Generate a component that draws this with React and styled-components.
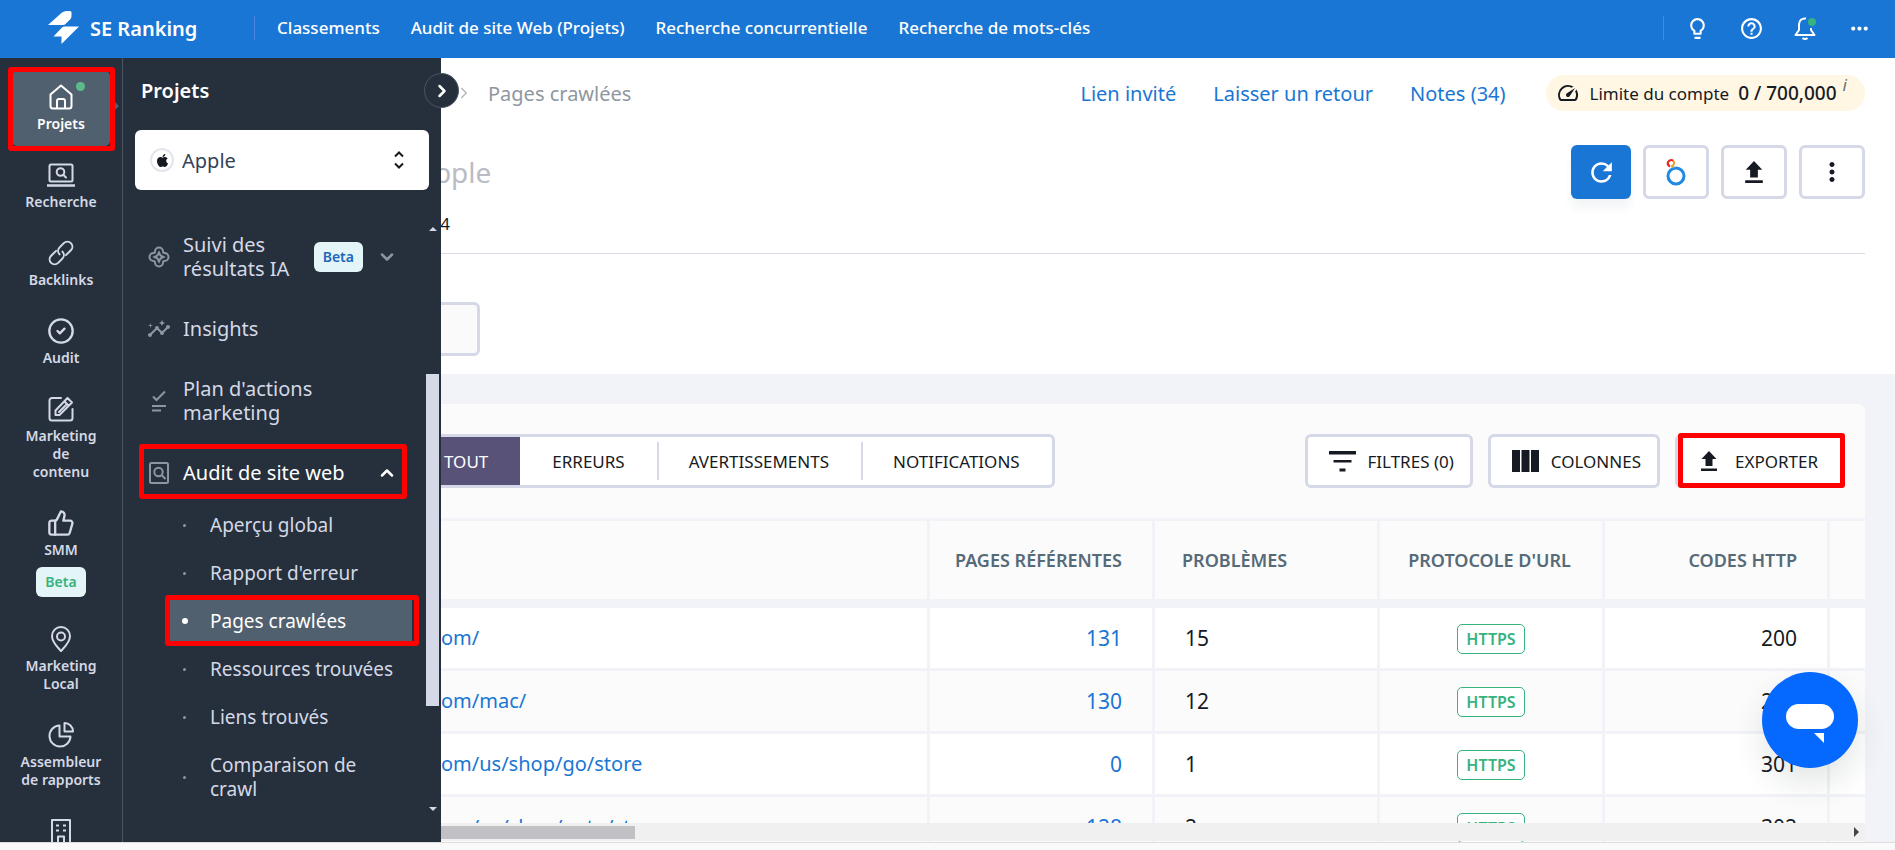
import React from "react";
import styled, { createGlobalStyle, css } from "styled-components";
import { FaApple } from "react-icons/fa";
import {
  MdHelpOutline,
  MdInsights,
  MdLightbulbOutline,
  MdMoreHoriz,
  MdMoreVert,
  MdOutlineSpeed,
  MdRefresh,
} from "react-icons/md";
import { ChevronDown, ChevronRight, ChevronUp, CircleCheck, ThumbsUp } from "lucide-react";

const topLinks = [
  "Classements",
  "Audit de site Web (Projets)",
  "Recherche concurrentielle",
  "Recherche de mots-clés",
];

const subPages = [
  { name: "Aperçu global" },
  { name: "Rapport d'erreur" },
  { name: "Pages crawlées", active: true },
  { name: "Ressources trouvées" },
  { name: "Liens trouvés" },
  { name: "Comparaison de crawl" },
];

const tabs = ["Tout", "Erreurs", "Avertissements", "Notifications"];

const pages = [
  { url: "om/", refs: 131, issues: 15, code: 200 },
  { url: "om/mac/", refs: 130, issues: 12, code: 200 },
  { url: "om/us/shop/go/store", refs: 0, issues: 1, code: 301 },
  { url: "om/us/shop/goto/st", refs: 128, issues: 2, code: 302 },
];

/* ---------- icons ---------- */

const LineIcon = ({ size = 28, children }) => (
  <svg width={size} height={size} viewBox="0 0 28 28" fill="none" stroke="currentColor" strokeWidth="2" strokeLinejoin="round" strokeLinecap="round" aria-hidden="true">
    {children}
  </svg>
);

const Logo = () => (
  <svg width="32" height="36" viewBox="0 0 32 36" fill="#fff" aria-hidden="true">
    <path d="M0 15 14 2.500Q16 1 18.500 1H22Q23.500 1 23.500 2.500V6Q23.500 8 22 9.500L17.500 14Q16.500 15 15 15Z" />
    <path d="M31 16.500 13.500 34V26.500H5.500L14 17.500Q15 16.500 16.500 16.500Z" />
  </svg>
);

const HomeIcon = () => (
  <LineIcon>
    <path d="M3.500 11.500 14 2.500l10.500 9V23a2.500 2.500 0 0 1-2.500 2.500H6A2.500 2.500 0 0 1 3.500 23Z" />
    <path d="M10 25v-7a2 2 0 0 1 2-2h4a2 2 0 0 1 2 2v7" />
  </LineIcon>
);

const SearchIcon = () => (
  <LineIcon>
    <rect x="2.500" y="3.500" width="23" height="17" rx="1.500" />
    <path d="M.5 24.500h27" strokeWidth="2.500" />
    <circle cx="13.500" cy="11" r="3.800" />
    <path d="m16.500 14 2.500 2.500" />
  </LineIcon>
);

const LinkIcon = () => (
  <LineIcon>
    <g transform="rotate(-45 14 14)">
      <path d="M12 9H5a5 5 0 0 0 0 10h6a5 5 0 0 0 5-5" />
      <path d="M16 19h7a5 5 0 0 0 0-10h-6a5 5 0 0 0-5 5" />
    </g>
  </LineIcon>
);

const EditIcon = () => (
  <LineIcon>
    <path d="M14 3H5a2.500 2.500 0 0 0-2.500 2.500V23A2.500 2.500 0 0 0 5 25.500h18a2.500 2.500 0 0 0 2.500-2.500v-9" />
    <path d="M8.500 19.500v-4L20.500 3 25 7.500 12.500 20H8.500ZM17.500 6.500l4 4M12 17l8-8" />
  </LineIcon>
);

const PinIcon = () => (
  <LineIcon>
    <path d="M14 26C11 22.500 5 17.500 5 11a9 9 0 0 1 18 0c0 6.500-6 11.500-9 15Z" />
    <circle cx="14" cy="11.500" r="4" />
  </LineIcon>
);

const PieIcon = () => (
  <LineIcon>
    <path d="M12.500 4.500a10.500 10.500 0 1 0 11 11h-11Z" />
    <path d="M17.500 2v8.500H26A8.500 8.500 0 0 0 17.500 2Z" />
  </LineIcon>
);

const BuildingIcon = () => (
  <LineIcon>
    <path d="M5 28V3h18v25M11 28v-8.500h6V28M9 8.500h3M9 13.500h3M16 8.500h3M16 13.500h3" strokeLinecap="butt" />
  </LineIcon>
);

const BellIcon = () => (
  <svg width="24" height="24" viewBox="0 0 24 24" fill="none" stroke="#fff" strokeWidth="2" strokeLinejoin="round" aria-hidden="true">
    <path d="M13 2.500c-4-.6-7 2-7 6V14l-3.500 5h19L18 14v-2M9.500 22c1.500 1.300 3.500 1.300 5 0" />
    <circle cx="19" cy="6" r="4" fill="#36b37e" stroke="none" />
  </svg>
);

const FlowerIcon = () => (
  <svg width="24" height="24" viewBox="0 0 24 24" fill="none" stroke="currentColor" strokeWidth="2" aria-hidden="true">
    <path d="M8 6.500a4 4 0 0 1 8 0c0 1 .5 1.500 1.500 1.500a4 4 0 0 1 0 8c-1 0-1.500.5-1.500 1.500a4 4 0 0 1-8 0c0-1-.5-1.500-1.500-1.500a4 4 0 0 1 0-8C7.500 8 8 7.500 8 6.500Z" />
    <path d="M12 7.500 13.500 10.500 16.500 12l-3 1.500L12 16.500l-1.500-3L7.500 12l3-1.500Z" />
  </svg>
);

const PlanIcon = () => (
  <svg width="24" height="24" viewBox="0 0 24 24" fill="none" stroke="currentColor" strokeWidth="2" aria-hidden="true">
    <path d="M6 7.500 9.500 11 18 2.500M5 17h14M5 21.500h9" />
  </svg>
);

const AuditIcon = () => (
  <svg width="24" height="24" viewBox="0 0 24 24" fill="none" stroke="currentColor" strokeWidth="2" aria-hidden="true">
    <rect x="3" y="2" width="18" height="20" rx="1.500" />
    <circle cx="11.500" cy="11" r="4.200" />
    <path d="m14.500 14 4 4" />
  </svg>
);

const ConsoleIcon = () => (
  <svg width="24" height="28" viewBox="0 0 24 28" fill="none" strokeWidth="3" aria-hidden="true">
    <circle cx="12" cy="18" r="8" stroke="#1e88e5" />
    <path d="M4 7a3.500 3.500 0 0 1 5.500-4" stroke="#e8271c" strokeWidth="2" />
    <path d="M9 2.500A3.500 3.500 0 0 1 7 8.500" stroke="#f29b1d" strokeWidth="2" />
    <path d="M4 5a3.500 3.500 0 0 0 2 3.500" stroke="#e8271c" strokeWidth="2" />
    <path d="M8.500 7.500 9.500 10" stroke="#d9a53a" strokeWidth="2" />
  </svg>
);

const UploadIcon = ({ size = 20 }) => (
  <svg width={size} height={size} viewBox="0 0 20 20" fill="currentColor" aria-hidden="true">
    <path d="M10 0 17.500 8H13.500V15H6.500V8H2.500ZM2 17.500h16V20H2Z" />
  </svg>
);

const FilterIcon = () => (
  <svg width="27" height="22" viewBox="0 0 27 22" fill="currentColor" aria-hidden="true">
    <path d="M0 1h27v3.500H0ZM4.500 10h18v2.500h-18ZM10.500 18.500h6v3h-6Z" />
  </svg>
);

const ColumnsIcon = () => (
  <svg width="27" height="22" viewBox="0 0 27 22" fill="currentColor" aria-hidden="true">
    <path d="M0 0h8v22H0ZM9.500 0h8v22h-8ZM19 0h8v22h-8Z" />
  </svg>
);

const ChatIcon = () => (
  <svg width="48" height="40" viewBox="0 0 48 40" fill="#fff" aria-hidden="true">
    <rect width="48" height="25" rx="12.500" />
    <path d="M28 29h10v10Z" />
  </svg>
);

const UpDownIcon = () => (
  <svg width="12" height="18" viewBox="0 0 12 18" fill="none" stroke="#161a22" strokeWidth="2" aria-hidden="true">
    <path d="M2 5.500 6 1.500l4 4M2 12.500l4 4 4-4" />
  </svg>
);

const railItems = [
  { label: "Projets", icon: <HomeIcon />, active: true },
  { label: "Recherche", icon: <SearchIcon /> },
  { label: "Backlinks", icon: <LinkIcon /> },
  { label: "Audit", icon: <CircleCheck size={28} strokeWidth={2} /> },
  { label: "Marketing\nde\ncontenu", icon: <EditIcon /> },
  { label: "SMM", icon: <ThumbsUp size={28} strokeWidth={2} />, beta: true },
  { label: "Marketing\nLocal", icon: <PinIcon /> },
  { label: "Assembleur\nde rapports", icon: <PieIcon /> },
];

/* ---------- page ---------- */

const App = () => {
  return (
    <Page>
      <GlobalStyle />
      <TopBar>
        <Brand href="#">
          <Logo />
          SE Ranking
        </Brand>
        <TopNav>
          {topLinks.map((link) => (
            <a href="#" key={link}>{link}</a>
          ))}
        </TopNav>
        <TopTools>
          <ToolButton aria-label="Idées"><MdLightbulbOutline size={25} /></ToolButton>
          <ToolButton aria-label="Aide"><MdHelpOutline size={25} /></ToolButton>
          <ToolButton aria-label="Alertes"><BellIcon /></ToolButton>
          <ToolButton aria-label="Plus"><MdMoreHoriz size={25} /></ToolButton>
        </TopTools>
      </TopBar>

      <Body>
        <Rail>
          {railItems.map((item) => (
            <RailItem href="#" key={item.label} $active={item.active}>
              <RailIcon>{item.icon}</RailIcon>
              <span>{item.label}</span>
              {item.beta && <Beta $green>Beta</Beta>}
              {item.active && <ActiveArrow />}
            </RailItem>
          ))}
          <RailItem href="#" aria-label="Agence">
            <RailIcon><BuildingIcon /></RailIcon>
          </RailItem>
        </Rail>

        <Main>
          <Header>
            <CrumbRow>
              <ChevronRight size={18} color="#b4b8bd" />
              <Crumb>Pages crawlées</Crumb>
              <HeaderLinks>
                <a href="#">Lien invité</a>
                <a href="#">Laisser un retour</a>
                <a href="#">Notes (34)</a>
              </HeaderLinks>
              <LimitPill>
                <MdOutlineSpeed size={24} />
                <span>Limite du compte</span>
                <strong>0 / 700,000</strong>
                <i>i</i>
              </LimitPill>
            </CrumbRow>
            <TitleRow>
              <h1>Apple</h1>
              <SquareButton $primary aria-label="Relancer"><MdRefresh size={31} /></SquareButton>
              <SquareButton aria-label="Console"><ConsoleIcon /></SquareButton>
              <SquareButton aria-label="Partager"><UploadIcon size={22} /></SquareButton>
              <SquareButton aria-label="Options"><MdMoreVert size={30} /></SquareButton>
            </TitleRow>
            <DateRow>2024</DateRow>
            <PickerRow>
              <PickerButton aria-label="Segment" />
            </PickerRow>
          </Header>

          <Content>
            <Card>
              <Toolbar>
                <Tabs>
                  {tabs.map((tab, i) => (
                    <Tab key={tab} $active={i === 0}>{tab}</Tab>
                  ))}
                </Tabs>
                <ActionButton><FilterIcon />Filtres (0)</ActionButton>
                <ActionButton><ColumnsIcon />Colonnes</ActionButton>
                <ActionButton $marked><UploadIcon />Exporter</ActionButton>
              </Toolbar>
              <TableArea>
                <Table>
                  <colgroup>
                    <col />
                    <DataCol />
                    <DataCol />
                    <DataCol />
                    <DataCol />
                    <EdgeCol />
                  </colgroup>
                  <thead>
                    <tr>
                      <Th />
                      <Th $align="right">Pages référentes</Th>
                      <Th>Problèmes</Th>
                      <Th $align="center">Protocole d'URL</Th>
                      <Th $align="right">Codes HTTP</Th>
                      <Th />
                    </tr>
                  </thead>
                  <tbody>
                    {pages.map((page) => (
                      <Row key={page.url}>
                        <UrlCell><a href="#">{page.url}</a></UrlCell>
                        <Td $align="right"><a href="#">{page.refs}</a></Td>
                        <Td>{page.issues}</Td>
                        <Td $align="center"><Protocol>HTTPS</Protocol></Td>
                        <Td $align="right">{page.code}</Td>
                        <Td />
                      </Row>
                    ))}
                  </tbody>
                </Table>
                <HScroll>
                  <HThumb />
                  <svg width="5" height="10" viewBox="0 0 5 10" fill="#444"><path d="M0 0 5 5 0 10Z" /></svg>
                </HScroll>
              </TableArea>
            </Card>
          </Content>
        </Main>

        <Flyout>
          <FlyoutTitle>Projets</FlyoutTitle>
          <Collapse aria-label="Réduire"><ChevronRight size={20} strokeWidth={3} /></Collapse>
          <ProjectPicker>
            <Favicon><FaApple size={15} /></Favicon>
            <select aria-label="Projet" defaultValue="Apple">
              <option>Apple</option>
            </select>
            <UpDownIcon />
          </ProjectPicker>
          <NavScroll>
            <NavList>
              <NavItem href="#">
                <FlowerIcon />
                <span>Suivi des résultats IA</span>
                <Beta>Beta</Beta>
                <ChevronDown size={20} strokeWidth={3} />
              </NavItem>
              <NavItem href="#">
                <MdInsights size={24} />
                <span>Insights</span>
              </NavItem>
              <NavItem href="#">
                <PlanIcon />
                <span>Plan d'actions marketing</span>
              </NavItem>
              <NavItem href="#" $active>
                <AuditIcon />
                <span>Audit de site web</span>
                <ChevronUp size={20} strokeWidth={3} />
              </NavItem>
              {subPages.map((page) => (
                <SubItem href="#" key={page.name} $active={page.active}>
                  <span>{page.name}</span>
                </SubItem>
              ))}
            </NavList>
            <VScroll>
              <svg width="8" height="4" viewBox="0 0 8 4" fill="#d5d8e6"><path d="M0 4 4 0 8 4Z" /></svg>
              <VThumb />
              <svg width="8" height="4" viewBox="0 0 8 4" fill="#d5d8e6"><path d="M0 0H8L4 4Z" /></svg>
            </VScroll>
          </NavScroll>
        </Flyout>

        <ChatButton aria-label="Chat"><ChatIcon /></ChatButton>
      </Body>
      <BottomEdge />
    </Page>
  );
};

const GlobalStyle = createGlobalStyle`
  * {
    box-sizing: border-box;
  }

  body {
    margin: 0;
    font-family: "Noto Sans", "Open Sans", sans-serif;
    color: #161a22;
    overflow: hidden;
  }

  a {
    text-decoration: none;
    color: inherit;
  }

  button, select {
    font: inherit;
    color: inherit;
  }
`;

/* red frame drawn over a highlighted control */
const marked = css`
  position: relative;

  &::after {
    content: "";
    position: absolute;
    border: 5px solid #ff0000;
    border-radius: 3px;
    pointer-events: none;
    z-index: 2;
  }
`;

const Page = styled.div`
  display: flex;
  flex-direction: column;
  height: 100vh;
`;

const TopBar = styled.header`
  display: flex;
  align-items: center;
  height: 58px;
  flex-shrink: 0;
  padding: 0 18px 2px 48px;
  background: #1976d4;
  color: #fff;
`;

const Brand = styled.a`
  display: flex;
  align-items: center;
  gap: 10px;
  width: 206px;
  font-size: 20px;
  font-weight: 600;
`;

const TopNav = styled.nav`
  display: flex;
  gap: 31px;
  padding-left: 22px;
  border-left: 1px solid #4a84dc;
  font-size: 17px;
  font-weight: 500;
  line-height: 24px;
  flex: 1;
`;

const TopTools = styled.div`
  display: flex;
  align-items: center;
  gap: 18px;
  height: 24px;
  padding-left: 15px;
  border-left: 1px solid #4a84dc;
`;

const ToolButton = styled.button`
  display: flex;
  align-items: center;
  justify-content: center;
  width: 36px;
  height: 36px;
  padding: 0;
  border: 0;
  background: none;
`;

const Body = styled.div`
  position: relative;
  display: flex;
  flex: 1;
  min-height: 0;
`;

const Rail = styled.nav`
  display: flex;
  flex-direction: column;
  gap: 3px;
  width: 123px;
  flex-shrink: 0;
  padding: 13px 12px 0;
  overflow: hidden;
  background: #25303c;
  border-right: 1px solid #4a5561;
`;

const RailItem = styled.a`
  display: flex;
  flex-direction: column;
  align-items: center;
  flex-shrink: 0;
  padding: 12px 0 13px;
  border-radius: 5px;
  font-size: 14px;
  font-weight: 600;
  line-height: 18px;
  text-align: center;
  white-space: pre-line;
  color: ${(props) => (props.$active ? "#ffffff" : "#d5d8e6")};

  ${(props) =>
    props.$active &&
    css`
      ${marked}
      background: #51606e;

      &::after {
        inset: -4px -5px -5px -4px;
      }

      &::before {
        content: "";
        position: absolute;
        top: 11px;
        right: 25px;
        width: 9px;
        height: 9px;
        border-radius: 50%;
        background: #5cba8c;
      }
    `}
`;

const RailIcon = styled.span`
  display: flex;
  height: 28px;
  margin-bottom: 4px;
`;

const ActiveArrow = styled.span`
  position: absolute;
  top: 31px;
  right: -9px;
  border: 4px solid transparent;
  border-left-color: #51606e;
  border-right: 0;
`;

const Beta = styled.span`
  padding: 0 9px;
  border-radius: 6px;
  font-size: 14px;
  font-weight: 600;
  line-height: 30px;
  background: #e3f5f6;
  color: ${(props) => (props.$green ? "#36b37e" : "#1f66b8")};
  margin-top: ${(props) => (props.$green ? "8px" : "0")};
`;

const Flyout = styled.aside`
  position: absolute;
  top: 0;
  bottom: 0;
  left: 123px;
  display: flex;
  flex-direction: column;
  width: 318px;
  background: #25303c;
`;

const FlyoutTitle = styled.h2`
  margin: 0;
  padding: 18px 18px 24px;
  font-size: 20px;
  font-weight: 600;
  line-height: 30px;
  color: #fff;
`;

const Collapse = styled.button`
  position: absolute;
  top: 15px;
  right: -18px;
  display: flex;
  align-items: center;
  justify-content: center;
  width: 35px;
  height: 35px;
  padding: 0;
  border: 1px solid #4a5561;
  border-radius: 50%;
  background: #25303c;
  color: #fff;
`;

const ProjectPicker = styled.div`
  display: flex;
  align-items: center;
  height: 60px;
  margin: 0 12px;
  padding: 0 24px 0 15px;
  border-radius: 6px;
  background: #fff;
  color: #34435a;

  select {
    flex: 1;
    padding: 0 8px;
    border: 0;
    appearance: none;
    background: none;
    font-size: 20px;
  }
`;

const Favicon = styled.span`
  display: flex;
  align-items: center;
  justify-content: center;
  width: 24px;
  height: 24px;
  border: 2px solid #e3e5ec;
  border-radius: 50%;
  color: #161a22;
`;

const NavScroll = styled.div`
  display: flex;
  flex: 1;
  min-height: 0;
  margin: 24px 2px 26px 0;
`;

const NavList = styled.nav`
  flex: 1;
  overflow: hidden;
`;

const NavItem = styled.a`
  display: flex;
  align-items: center;
  margin: 0 19px 0 16px;
  padding: ${(props) => (props.$active ? "19px 10px 16px 8px" : "19px 10px 17px 8px")};
  font-size: 20px;
  line-height: 24px;
  color: ${(props) => (props.$active ? "#ffffff" : "#d5d8e6")};

  > svg {
    flex-shrink: 0;
    color: ${(props) => (props.$active ? "#ffffff" : "#8d969f")};
  }

  > svg:first-child {
    margin-right: 12px;
    color: #8d969f;
  }

  > span:nth-child(2) {
    flex: 1;
  }

  > span + svg {
    margin-left: 14px;
  }

  ${(props) =>
    props.$active &&
    css`
      ${marked}

      &::after {
        inset: 2px 0 2px 0;
      }
    `}
`;

const SubItem = styled.a`
  display: flex;
  align-items: center;
  margin: 0 14px 0 47px;
  padding: 12px 14px 12px 40px;
  font-size: 19px;
  line-height: 24px;
  position: relative;
  color: ${(props) => (props.$active ? "#ffffff" : "#d5d8e6")};

  &::before {
    content: "";
    position: absolute;
    left: ${(props) => (props.$active ? "12px" : "13px")};
    width: ${(props) => (props.$active ? "6px" : "3px")};
    height: ${(props) => (props.$active ? "6px" : "3px")};
    border-radius: 50%;
    background: ${(props) => (props.$active ? "#ffffff" : "#8d969f")};
  }

  ${(props) =>
    props.$active &&
    css`
      ${marked}
      margin: 3px 14px 3px 47px;
      padding: 9px 0 9px 40px;
      background: #51606e;

      &::after {
        inset: -5px -7px -4px -5px;
      }
    `}
`;

const VScroll = styled.div`
  display: flex;
  flex-direction: column;
  align-items: center;
  width: 13px;
  padding: 13px 0 5px;
`;

const VThumb = styled.div`
  width: 100%;
  height: 332px;
  margin: auto 0 101px;
  background: #d5d8e6;
`;

const Main = styled.main`
  display: flex;
  flex-direction: column;
  flex: 1;
  min-width: 0;
`;

const Header = styled.section`
  padding: 0 30px 18px;
  background: #fff;
`;

const CrumbRow = styled.div`
  display: flex;
  align-items: center;
  height: 70px;
  padding-left: 302px;
  font-size: 20px;
`;

const Crumb = styled.span`
  flex: 1;
  padding-left: 15px;
  color: #8f979f;
`;

const HeaderLinks = styled.div`
  display: flex;
  gap: 37px;
  margin-right: 40px;
  color: #1976d4;
`;

const LimitPill = styled.div`
  display: flex;
  align-items: center;
  height: 36px;
  padding: 0 18px 0 10px;
  border-radius: 18px;
  background: #fff7e3;
  font-size: 17px;

  span {
    margin: 0 9px 0 10px;
  }

  strong {
    font-size: 19px;
    font-weight: 500;
  }

  i {
    align-self: flex-start;
    margin-left: 6px;
    font-size: 17px;
    line-height: 20px;
    color: #66717c;
  }
`;

const TitleRow = styled.div`
  display: flex;
  align-items: center;
  gap: 12px;
  padding: 17px 0 12px 263px;

  h1 {
    flex: 1;
    margin: 0;
    font-size: 28px;
    font-weight: 400;
    color: #b9bcc4;
  }
`;

const SquareButton = styled.button`
  display: flex;
  align-items: center;
  justify-content: center;
  width: ${(props) => (props.$primary ? "60px" : "66px")};
  height: 54px;
  padding: 0;
  border: ${(props) => (props.$primary ? "0" : "3px solid #d5d8e6")};
  border-radius: 6px;
  background: ${(props) => (props.$primary ? "#1976d4" : "#ffffff")};
  color: ${(props) => (props.$primary ? "#ffffff" : "#161a22")};
  box-shadow: ${(props) => (props.$primary ? "0 9px 8px rgba(30, 60, 90, 0.05)" : "none")};
`;

const DateRow = styled.div`
  padding: 0 0 16px 258px;
  border-bottom: 1px solid #d9dbe9;
  font-size: 17px;
  line-height: 26px;
`;

const PickerRow = styled.div`
  display: flex;
  padding: 48px 0 0 258px;
`;

const PickerButton = styled.button`
  width: 69px;
  height: 54px;
  border: 3px solid #d5d8e6;
  border-radius: 6px;
  background: #fafafa;
`;

const Content = styled.section`
  display: flex;
  flex: 1;
  min-height: 0;
  padding: 30px 30px 0;
  background: #f2f3f8;
`;

const Card = styled.div`
  display: flex;
  flex-direction: column;
  flex: 1;
  min-width: 0;
  border-radius: 8px 8px 0 0;
  background: #fbfbfc;
`;

const Toolbar = styled.div`
  display: flex;
  gap: 15px;
  padding: 30px 20px 30px 256px;
`;

const Tabs = styled.div`
  display: flex;
  height: 54px;
  margin-right: auto;
  border: 3px solid #d5d8e6;
  border-radius: 6px;
  background: #fff;
  overflow: hidden;
`;

const Tab = styled.button`
  position: relative;
  padding: 0 32px;
  border: 0;
  background: ${(props) => (props.$active ? "#595278" : "none")};
  color: ${(props) => (props.$active ? "#ffffff" : "#161a22")};
  font-size: 17px;
  text-transform: uppercase;

  &:nth-child(n + 3)::before {
    content: "";
    position: absolute;
    top: 5px;
    bottom: 5px;
    left: 0;
    width: 2px;
    background: #d5d8e6;
  }
`;

const ActionButton = styled.button`
  display: flex;
  align-items: center;
  gap: 12px;
  height: 54px;
  padding: 0 16px 0 21px;
  border: 3px solid #d5d8e6;
  border-radius: 6px;
  background: #fff;
  font-size: 17px;
  text-transform: uppercase;

  ${(props) =>
    props.$marked &&
    css`
      ${marked}
      gap: 16px;
      padding-right: 24px;

      &::after {
        inset: -4px -3px -3px 0;
      }
    `}
`;

const TableArea = styled.div`
  position: relative;
  flex: 1;
  min-height: 0;
  overflow: hidden;
  border-top: 3px solid #f2f3f8;
`;

const Table = styled.table`
  width: 100%;
  table-layout: fixed;
  border-collapse: separate;
  border-spacing: 0;
`;

const DataCol = styled.col`
  width: 225px;
`;

const EdgeCol = styled.col`
  width: 35px;
`;

const cell = css`
  border-right: 3px solid #f2f3f8;
  text-align: ${(props) => props.$align || "left"};
  white-space: nowrap;

  &:last-child {
    border-right: 0;
    padding: 0;
  }
`;

const Th = styled.th`
  height: 87px;
  padding: 0 30px 0 ${(props) => (props.$align === "right" ? "18px" : "27px")};
  border-bottom: 9px solid #f2f3f8;
  font-size: 18px;
  font-weight: 600;
  line-height: 24px;
  text-transform: uppercase;
  color: #566a77;
  ${cell}
`;

const Td = styled.td`
  height: 63px;
  padding: 0 30px;
  border-bottom: 3px solid #f2f3f8;
  font-size: 21px;
  line-height: 28px;
  ${cell}

  a {
    color: #1976d4;
  }
`;

/* the flyout covers the left part of this column */
const UrlCell = styled(Td)`
  padding-left: 288px;
  font-size: 20px;
`;

const Row = styled.tr`
  background: #fff;

  &:nth-child(even) {
    background: #fbfbfc;
  }
`;

const Protocol = styled.span`
  display: inline-block;
  padding: 0 8px;
  border: 1px solid #36b37e;
  border-radius: 5px;
  background: #fff;
  font-size: 16px;
  font-weight: 600;
  line-height: 28px;
  vertical-align: middle;
  color: #36b37e;
`;

const HScroll = styled.div`
  position: absolute;
  left: 0;
  right: 0;
  bottom: 1px;
  display: flex;
  align-items: center;
  justify-content: space-between;
  height: 18px;
  padding-right: 6px;
  background: #f0f0f0;
`;

const HThumb = styled.div`
  width: 482px;
  height: 13px;
  background: #c1c1c5;
`;

const ChatButton = styled.button`
  position: absolute;
  right: 37px;
  bottom: 74px;
  display: flex;
  align-items: center;
  justify-content: center;
  width: 96px;
  height: 96px;
  padding: 8px 0 0;
  border: 0;
  border-radius: 50%;
  background: #0568ff;
  box-shadow: 0 16px 32px rgba(35, 47, 53, 0.12);
`;

const BottomEdge = styled.footer`
  height: 8px;
  flex-shrink: 0;
  border-top: 1px solid #dcdcdc;
  background: #f9faf9;
`;

export default App;
